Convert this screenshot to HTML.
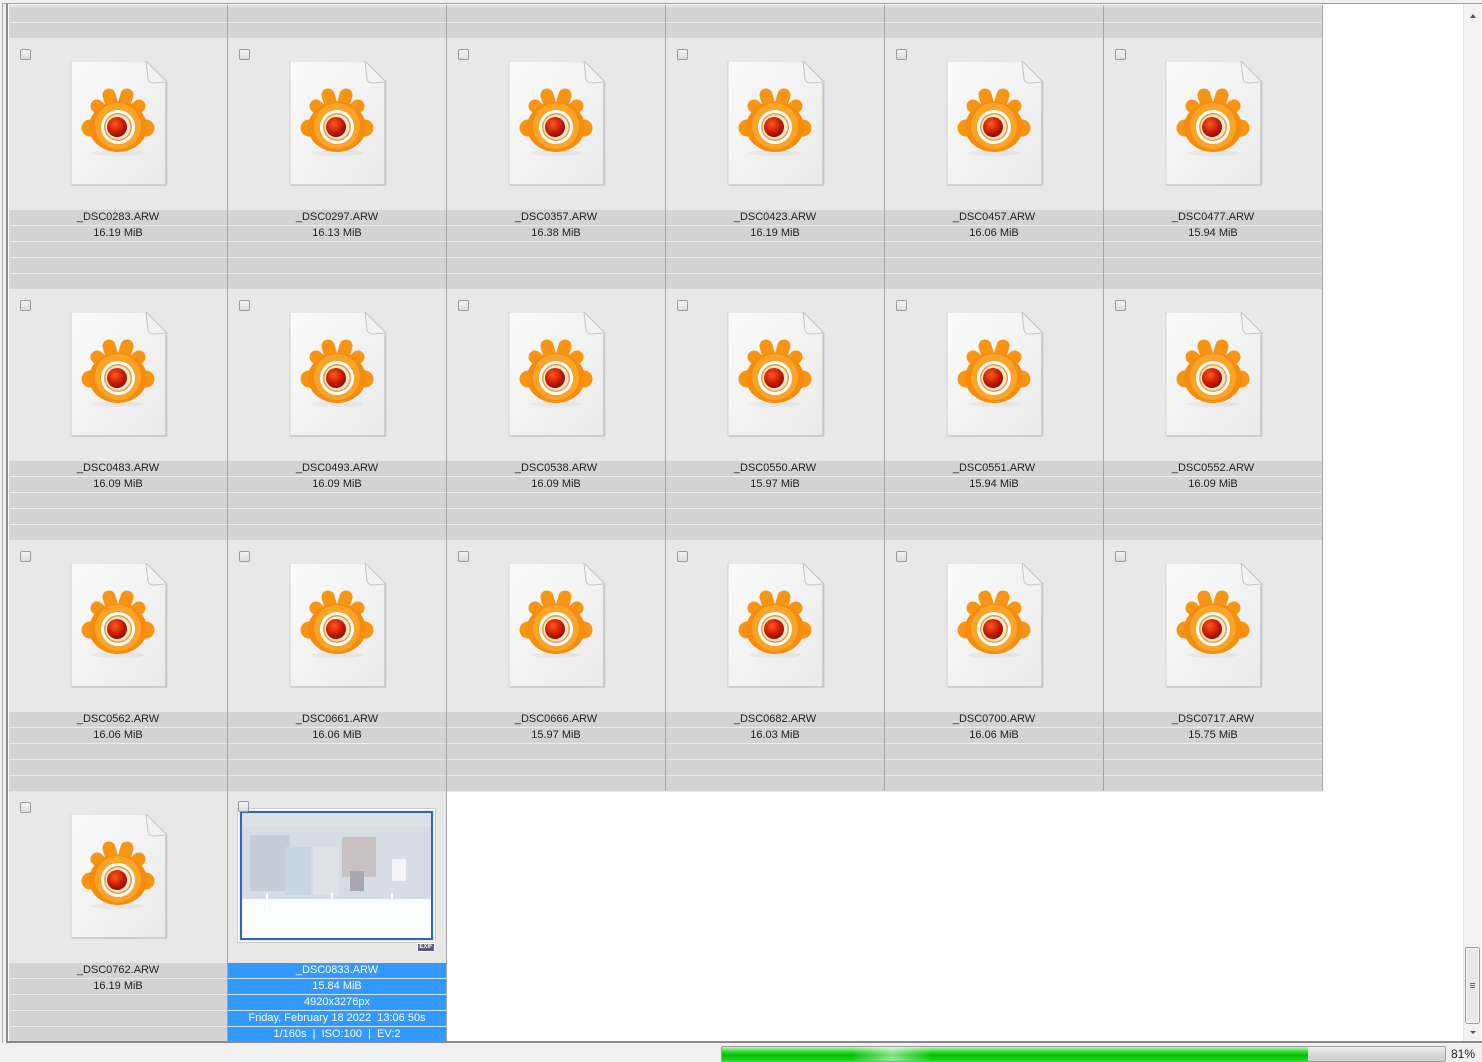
<!DOCTYPE html>
<html><head><meta charset="utf-8">
<style>
*{margin:0;padding:0;box-sizing:border-box}
body{width:1482px;height:1062px;background:#f0f0f0;position:relative;overflow:hidden;font-family:Tahoma,"Liberation Sans",sans-serif;font-size:11px;color:#222}
#frame{position:absolute;left:2px;top:3px;width:1480px;height:1040px;border-left:1px solid #a8a8a8;border-top:1px solid #a8a8a8}
#inner{position:absolute;left:6px;top:3px;width:1476px;height:1040px;border-left:2px solid #8a8a8a;border-top:1px solid #a0a0a0;border-bottom:2px solid #8a8a8a;background:#fff}
#grid{position:absolute;left:9px;top:5px;width:1314px;height:1036px;overflow:hidden}
.cell{position:absolute;width:219px;height:251px;background:#e8e8e8;border-right:1px solid #a6a6a6;border-bottom:1px solid #a6a6a6}
.cb{position:absolute;left:11px;top:11px;width:11px;height:11px;border:1px solid #9a9a9a;border-radius:2px;background:linear-gradient(#f4f4f4,#dcdcdc)}
.lab{position:absolute;left:0;width:218px;height:16px;background:#d3d3d3;border-bottom:1px solid #ececec;text-align:center;line-height:15px;white-space:nowrap}
.sel .lab{background:#3399ff;color:#fff;border-bottom:1px solid #cfe4ff}
.ic{position:absolute;left:61px;top:23px}
#sb{position:absolute;left:1463px;top:4px;width:18px;height:1037px;background:#f2f2f2;border-left:1px solid #e4e4e4}
</style></head><body>
<div id="frame"></div>
<div id="inner"></div>
<svg width="0" height="0" style="position:absolute">
<defs>
<linearGradient id="pg" x1="0" y1="0" x2="1" y2="1"><stop offset="0" stop-color="#fbfbfb"/><stop offset="1" stop-color="#e9e9e9"/></linearGradient>
<radialGradient id="rd" cx="0.4" cy="0.35" r="0.7"><stop offset="0" stop-color="#ff5a20"/><stop offset="0.6" stop-color="#c81a00"/><stop offset="1" stop-color="#8a0c00"/></radialGradient>
<g id="icon">
<path d="M1,0 H76 L97,21 V124 H1 Z" fill="url(#pg)" stroke="#d2d2d2" stroke-width="1"/>
<path d="M96,22 V124 H2" fill="none" stroke="#bdbdbd" stroke-width="1.2"/>
<path d="M76,0 L78,18 Q79,22 84,22 L97,21 Z" fill="#f2f2f2" stroke="#c4c4c4"/>
<ellipse cx="48" cy="92" rx="26" ry="3" fill="#000" opacity="0.04"/>
<g stroke="#f79414" stroke-linecap="round" fill="none">
<path d="M48,64 L27,45 M48,64 L39,34 M48,64 L57,34 M48,64 L69,45" stroke-width="13"/>
<path d="M48,66 L20,67 M48,66 L76,67" stroke-width="17"/>
</g>
<ellipse cx="48" cy="66" rx="29" ry="25" fill="#f58c0c"/>
<circle cx="48" cy="65" r="23" fill="#fba42a"/>
<circle cx="48" cy="66" r="17" fill="#fff"/>
<circle cx="48" cy="66" r="14" fill="#f39a30"/>
<circle cx="48" cy="66" r="12.5" fill="#fbe8d0"/>
<circle cx="47" cy="66" r="10" fill="url(#rd)"/>
</g>
</defs></svg>
<div id="grid"></div>
<div id="sb">
<svg width="18" height="1037" style="position:absolute;left:0;top:0">
<path d="M6,14 L9,10 L12,14 Z" fill="#555"/>
<rect x="1.5" y="943.5" width="14" height="76" rx="2" fill="#e8e8e8" stroke="#9a9a9a"/>
<rect x="2.5" y="944.5" width="12" height="74" rx="1" fill="none" stroke="#fafafa"/>
<path d="M6,979.5 H11 M6,981.5 H11 M6,983.5 H11" stroke="#666"/>
<path d="M6,1027 L12,1027 L9,1030 Z" fill="#555"/>
</svg>
</div>
<div style="position:absolute;left:721px;top:1046px;width:725px;height:16px;border:1px solid #9c9c9c;border-radius:2px;background:linear-gradient(#f2f2f2,#d8d8d8 50%,#cfcfcf);overflow:hidden">
<div style="width:586px;height:100%;background:linear-gradient(#bff5bf,#2ed52e 35%,#00c400 60%,#25d825);position:relative">
<div style="position:absolute;left:130px;top:0;width:80px;height:100%;background:linear-gradient(90deg,rgba(255,255,255,0),rgba(255,255,255,0.5),rgba(255,255,255,0))"></div>
</div></div>
<div style="position:absolute;left:1451px;top:1047px;font-size:12px;color:#222">81%</div>
<script>
var names=[["_DSC0283.ARW","16.19 MiB"],["_DSC0297.ARW","16.13 MiB"],["_DSC0357.ARW","16.38 MiB"],["_DSC0423.ARW","16.19 MiB"],["_DSC0457.ARW","16.06 MiB"],["_DSC0477.ARW","15.94 MiB"],
["_DSC0483.ARW","16.09 MiB"],["_DSC0493.ARW","16.09 MiB"],["_DSC0538.ARW","16.09 MiB"],["_DSC0550.ARW","15.97 MiB"],["_DSC0551.ARW","15.94 MiB"],["_DSC0552.ARW","16.09 MiB"],
["_DSC0562.ARW","16.06 MiB"],["_DSC0661.ARW","16.06 MiB"],["_DSC0666.ARW","15.97 MiB"],["_DSC0682.ARW","16.03 MiB"],["_DSC0700.ARW","16.06 MiB"],["_DSC0717.ARW","15.75 MiB"],
["_DSC0762.ARW","16.19 MiB"]];
var h="";
function cell(x,y,labs,sel,content){
 var s='<div class="cell'+(sel?' sel':'')+'" style="left:'+x+'px;top:'+y+'px">'+content;
 for(var i=0;i<5;i++){s+='<div class="lab" style="top:'+(172+16*i)+'px">'+(labs[i]||'')+'</div>';}
 return s+'</div>';
}
var ic='<svg class="ic" width="99" height="126"><use href="#icon"/></svg><div class="cb"></div>';
for(var c=0;c<6;c++) h+=cell(219*c,-218,[],false,'');
for(var i=0;i<names.length;i++){var r=Math.floor(i/6),c=i%6;h+=cell(219*c,33+251*r,names[i],false,ic);}
var thumb='<div style="position:absolute;left:10px;top:18px;width:197px;height:133px;border:1px solid #fff;box-shadow:0 0 0 1px #ccc"><div style="position:absolute;left:1px;top:1px;right:1px;bottom:1px;border:2px solid #2f63c8;background:#fff;overflow:hidden">'+
'<svg width="191" height="127"><rect width="191" height="127" fill="#fafbfc"/><rect x="0" y="0" width="191" height="14" fill="#dde1e6"/><rect x="0" y="14" width="191" height="72" fill="#d6dce4"/><rect x="8" y="22" width="40" height="56" fill="#c4ccd6"/><rect x="43" y="34" width="26" height="48" fill="#c8d6e2"/><rect x="71" y="34" width="26" height="48" fill="#dde2e8"/><rect x="100" y="24" width="34" height="40" fill="#c9c1c4"/><rect x="150" y="46" width="14" height="22" fill="#f4f5f6"/><rect x="0" y="86" width="191" height="41" fill="#fbfcfd"/><rect x="108" y="58" width="14" height="20" fill="#a8a6b0"/><path d="M25 80V100M90 80V100M150 80V96" stroke="#fff" stroke-width="2"/></svg></div></div>'+
'<div style="position:absolute;left:189px;top:152px;width:18px;height:9px;background:#5a5a7c;border:1px solid #fff;color:#fff;font-size:6px;font-weight:bold;line-height:7px;text-align:center">EXIF</div><div class="cb" style="left:10px;top:10px"></div>';
h+=cell(219,33+251*3,["_DSC0833.ARW","15.84 MiB","4920x3276px","Friday, February 18 2022&nbsp; 13:06 50s","1/160s&nbsp; |&nbsp; ISO:100&nbsp; |&nbsp; EV:2"],true,thumb);
document.getElementById('grid').innerHTML=h;
</script>
</body></html>
